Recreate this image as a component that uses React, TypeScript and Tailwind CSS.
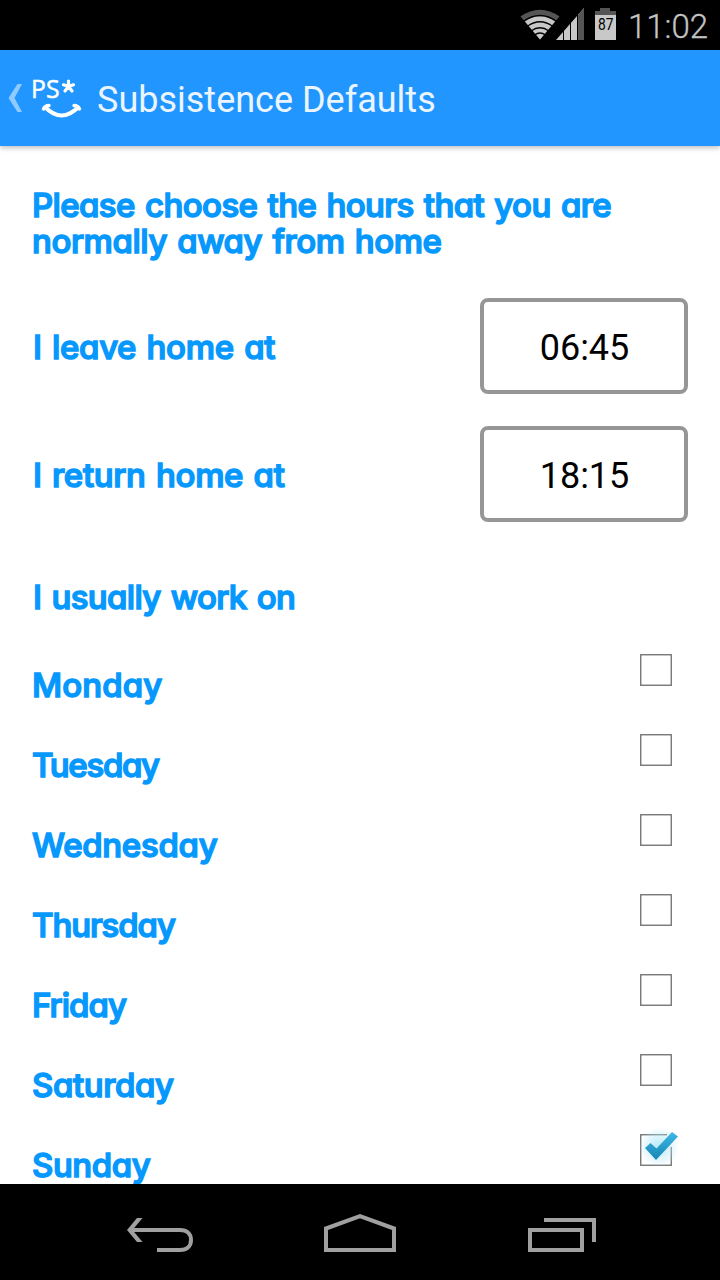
import { useState } from 'react';

const labelClass =
  "font-['Inter','Liberation_Sans',sans-serif] text-[33px] leading-9 font-medium text-[#0798fd] whitespace-nowrap [font-feature-settings:'cv11','calt'_0] [-webkit-text-stroke:1.5px_#0798fd] [stroke-linejoin:round] [word-spacing:2px]";

const days = [
  { name: 'Monday', spacing: 'tracking-[0.1px]' },
  { name: 'Tuesday', spacing: 'tracking-[-1.3px]' },
  { name: 'Wednesday', spacing: 'tracking-[-0.3px]' },
  { name: 'Thursday', spacing: 'tracking-[-1.1px]' },
  { name: 'Friday', spacing: 'tracking-[-1px]' },
  { name: 'Saturday', spacing: 'tracking-[-0.4px]' },
  { name: 'Sunday', spacing: 'tracking-[-0.4px]' },
];

function StatusBar() {
  return (
    <div className="flex h-[50px] shrink-0 bg-black">
      <svg width="620" height="50" viewBox="0 0 620 50" className="shrink-0">
        <path d="M520.5 16.5Q540 3 559.5 16.5L540 39.5Z" fill="#555" />
        <path d="M525 21.5Q540 11 555 21.5L540 39.5Z" fill="#c8c8c8" />
        <g fill="none" stroke="#000" strokeWidth="1.3">
          <path d="M523 21.5Q540 9.5 557 21.5" />
          <path d="M527 26.5Q540 17 553 26.5" />
          <path d="M531 31Q540 24.5 549 31" />
          <path d="M534.5 35Q540 31 545.5 35" />
        </g>
        <path d="M556 40L584 8V40Z" fill="#c8c8c8" />
        <path d="M578 15L584 8V40H578Z" fill="#555" />
        <path d="M563.5 28V40M570.5 20V40M577.5 12V40" stroke="#000" strokeWidth="1" />
        <path d="M595 15V11H600V8H610V11H616V15Z" fill="#555" />
        <path d="M595 15H616V40H595Z" fill="#c8c8c8" />
        <text x="598" y="30" fontFamily="Roboto, sans-serif" fontSize="16" textLength="15.5" lengthAdjust="spacingAndGlyphs">
          87
        </text>
      </svg>
      <span className="pl-2 font-['Roboto',sans-serif] text-[33px] leading-[53px] font-light text-[#c4c4c4] [-webkit-text-stroke:0.3px_#c4c4c4]">11:02</span>
    </div>
  );
}

function Header() {
  return (
    <header className="z-10 flex h-24 shrink-0 items-center bg-[#2196ff] shadow-[0_2px_5px_rgba(0,0,0,0.25)]">
      <svg width="97" height="96" viewBox="0 0 97 96" className="shrink-0" fill="none" stroke="#fff">
        <path d="M17.5 34H22L14.5 48L22 62H17.5L8.5 48Z" fill="#90caff" stroke="none" />
        <text x="31" y="48" fill="#fff" stroke="#fff" strokeWidth="0.5" fontFamily="'Open Sans', sans-serif" fontSize="25" textLength="28.5" lengthAdjust="spacingAndGlyphs">
          PS
        </text>
        <path d="M68.5 36.5V31M68.5 36.5L63.5 34.8M68.5 36.5L73.5 34.8M68.5 36.5L65 41M68.5 36.5L72 41" strokeWidth="3.2" strokeLinecap="round" />
        <path d="M45 57Q61.5 74 78.5 57" strokeWidth="4" />
        <path d="M43.5 59Q45 55.5 49 55.5M74 55.5Q78 55.5 79.5 59" strokeWidth="3.4" strokeLinecap="round" />
      </svg>
      <h1 className="pt-1 font-['Roboto',sans-serif] text-[36px] text-[#eaf5ff]">Subsistence Defaults</h1>
    </header>
  );
}

function TimeRow({ label, time }: { label: string; time: string }) {
  return (
    <div className="flex h-24 items-center justify-between">
      <span className={`${labelClass} pt-0.5 pl-px tracking-[-0.35px]`}>{label}</span>
      <button className="h-24 w-52 rounded-lg border-4 border-[#969696] bg-white pt-1 pl-px font-['Roboto',sans-serif] text-[36px] text-black">
        {time}
      </button>
    </div>
  );
}

function CheckBox({ checked, onClick }: { checked: boolean; onClick: () => void }) {
  return (
    <button onClick={onClick} className="mt-4 h-12 w-12">
      <svg width="48" height="48" viewBox="0 0 48 48">
        <defs>
          <linearGradient id="tick" x1="0" y1="0" x2="0" y2="1">
            <stop offset="0" stopColor="#3db9e6" />
            <stop offset="1" stopColor="#1785b3" />
          </linearGradient>
          <radialGradient id="glow">
            <stop offset="0" stopColor="#b5e8fa" />
            <stop offset="1" stopColor="#b5e8fa" stopOpacity="0" />
          </radialGradient>
        </defs>
        <rect x="8.75" y="8.75" width="30.5" height="30.5" fill="#fff" stroke="#6c6c6c" strokeWidth="1.3" />
        {checked && (
          <>
            <path d="M35 7H43V21H37.5L35 12Z" fill="#fff" />
            <circle cx="27" cy="21" r="20" fill="url(#glow)" />
            <path d="M13 22L18.5 17L24.5 22.5L40 6L46 10.5L24 34Z" fill="url(#tick)" />
          </>
        )}
      </svg>
    </button>
  );
}

function NavBar() {
  return (
    <nav className="flex h-24 shrink-0 bg-black">
      <svg width="720" height="96" viewBox="0 4 720 96" fill="none" stroke="#a0a0a0" strokeWidth="4">
        <path d="M130 50H180C187 50 191 54 191 60S187 70 180 70H157" />
        <path d="M137 38H142.5L132.5 50L142.5 62H137L127 50Z" fill="#a0a0a0" stroke="none" />
        <path d="M326 70V48.5L360 36.2L394 48.5V70Z" />
        <path d="M530 50H582V70H530Z" />
        <path d="M544 40H594V62" />
      </svg>
    </nav>
  );
}

export default function App() {
  const [selected, setSelected] = useState<string[]>(['Sunday']);

  const toggle = (day: string) => {
    setSelected(selected.includes(day) ? selected.filter((d) => d !== day) : [...selected, day]);
  };

  return (
    <div className="flex h-[1280px] w-[720px] flex-col overflow-hidden bg-white">
      <StatusBar />
      <Header />

      <main className="min-h-0 flex-1 overflow-hidden px-8 pt-[41px]">
        <h2 className={`${labelClass} tracking-[-0.6px]`}>
          Please choose the hours that you are
          <br />
          <span className="tracking-[-0.45px]">normally away from home</span>
        </h2>

        <div className="mt-[39px] flex flex-col gap-8">
          <TimeRow label="I leave home at" time="06:45" />
          <TimeRow label="I return home at" time="18:15" />
        </div>

        <h2 className={`${labelClass} mt-[57px] pl-px tracking-[-0.65px]`}>I usually work on</h2>

        <ul className="mt-[15px]">
          {days.map((day) => (
            <li key={day.name} className="flex h-20 items-start justify-between pr-2">
              <span className={`${labelClass} ${day.spacing} pt-[37px]`}>{day.name}</span>
              <CheckBox checked={selected.includes(day.name)} onClick={() => toggle(day.name)} />
            </li>
          ))}
        </ul>
      </main>

      <NavBar />
    </div>
  );
}
